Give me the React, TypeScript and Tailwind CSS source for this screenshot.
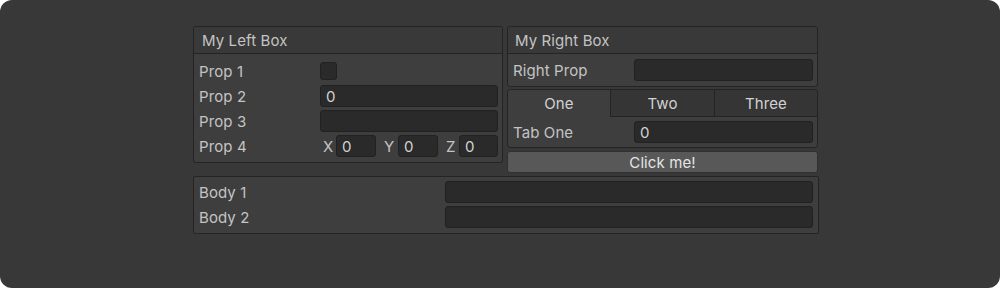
import React from "react";

const font = { fontFamily: "Inter, 'Noto Sans', sans-serif" };

function Field({ value = "", className = "" }: { value?: string; className?: string }) {
  return (
    <div
      className={`h-[22px] rounded-[3px] border border-[#212121] bg-[#2a2a2a] flex items-center pl-[5px] pt-[2px] text-[15px] tracking-[0.1px] text-[#d2d2d2] ${className}`}
    >
      {value}
    </div>
  );
}

function Row({ label, labelW, children }: { label: string; labelW: string; children: React.ReactNode }) {
  return (
    <div className="flex items-center h-[22px]">
      <div className={`${labelW} shrink-0 pt-[2px] text-[15px] tracking-[0.1px] text-[#c4c4c4]`}>{label}</div>
      <div className="flex-1 flex items-center min-w-0">{children}</div>
    </div>
  );
}

export default function App() {
  return (
    <div className="w-[1000px] h-[288px] bg-white" style={font}>
      <div className="w-[1000px] h-[288px] rounded-[12px] bg-[#383838] pl-[193px] pt-[26px]">
        <div className="w-[626px] flex flex-col gap-[3px]">
          <div className="flex gap-[4px] items-start">
            {/* Left box */}
            <div className="w-[310px] rounded-[3px] border border-[#242424] bg-[#3e3e3e]">
              <div className="h-[27px] bg-[#393939] border-b border-[#242424] rounded-t-[3px] flex items-center pl-[8px] pt-[2px] text-[15px] tracking-[0.1px] text-[#c4c4c4]">
                My Left Box
              </div>
              <div className="flex flex-col gap-[3px] pt-[6px] pb-[5px] pl-[5px] pr-[4px]">
                <Row label="Prop 1" labelW="w-[121px]">
                  <div className="w-[17px] h-[18px] rounded-[3px] border border-[#212121] bg-[#2a2a2a]" />
                </Row>
                <Row label="Prop 2" labelW="w-[121px]">
                  <Field value="0" className="flex-1" />
                </Row>
                <Row label="Prop 3" labelW="w-[121px]">
                  <Field className="flex-1" />
                </Row>
                <Row label="Prop 4" labelW="w-[121px]">
                  <div className="flex-1 flex items-center">
                    <span className="w-[16px] pl-[3px] pt-[2px] text-[15px] text-[#c4c4c4]">X</span>
                    <Field value="0" className="w-[40px]" />
                    <span className="w-[22px] pl-[8px] pt-[2px] text-[15px] text-[#c4c4c4]">Y</span>
                    <Field value="0" className="w-[40px]" />
                    <span className="w-[21px] pl-[8px] pt-[2px] text-[15px] text-[#c4c4c4]">Z</span>
                    <Field value="0" className="flex-1" />
                  </div>
                </Row>
              </div>
            </div>

            {/* Right column */}
            <div className="w-[311px] flex flex-col">
              <div className="rounded-[3px] border border-[#242424] bg-[#3e3e3e]">
                <div className="h-[27px] bg-[#393939] border-b border-[#242424] rounded-t-[3px] flex items-center pl-[7px] pt-[2px] text-[15px] tracking-[0.1px] text-[#c4c4c4]">
                  My Right Box
                </div>
                <div className="pt-[5px] pb-[5px] pl-[5px] pr-[4px]">
                  <Row label="Right Prop" labelW="w-[121px]">
                    <Field className="flex-1" />
                  </Row>
                </div>
              </div>
              <div className="mt-[2px] rounded-[3px] border border-[#242424] bg-[#3e3e3e]">
                <div className="flex h-[27px] text-[15px] tracking-[0.1px] text-[#d2d2d2]">
                  <div className="w-[102px] flex items-center justify-center pt-[2px] bg-[#3e3e3e] rounded-tl-[3px]">One</div>
                  <div className="w-[104px] flex items-center justify-center pt-[2px] bg-[#353535] border-l border-[#242424] border-b">Two</div>
                  <div className="flex-1 flex items-center justify-center pt-[2px] bg-[#353535] border-l border-[#242424] border-b rounded-tr-[3px]">Three</div>
                </div>
                <div className="pt-[4px] pb-[4px] pl-[5px] pr-[4px]">
                  <Row label="Tab One" labelW="w-[121px]">
                    <Field value="0" className="flex-1" />
                  </Row>
                </div>
              </div>
              <div className="mt-[3px] h-[22px] rounded-[3px] border border-[#303030] bg-[#585858] flex items-center justify-center pt-[2px] text-[15px] tracking-[0.1px] text-[#e4e4e4]">
                Click me!
              </div>
            </div>
          </div>

          {/* Body box */}
          <div className="w-[626px] border border-[#242424] rounded-[2px] bg-[#3e3e3e] flex flex-col gap-[3px] pt-[4px] pb-[5px] pl-[5px] pr-[5px]">
            <Row label="Body 1" labelW="w-[246px]">
              <Field className="flex-1" />
            </Row>
            <Row label="Body 2" labelW="w-[246px]">
              <Field className="flex-1" />
            </Row>
          </div>
        </div>
      </div>
    </div>
  );
}
